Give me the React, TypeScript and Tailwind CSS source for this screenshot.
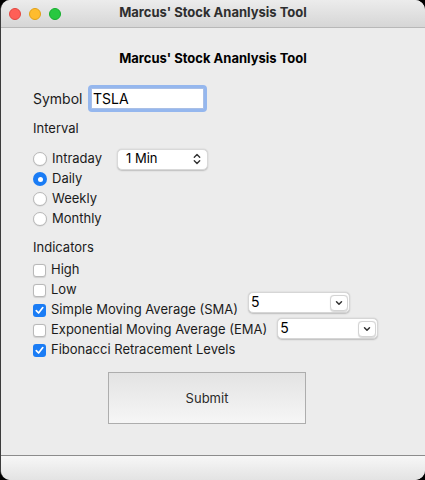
import { useState } from 'react'

const font = { fontFamily: 'Inter, "Noto Sans", sans-serif' }

const Radio = ({ checked }: { checked: boolean }) =>
    checked ? (
        <span className="flex items-center justify-center w-[14px] h-[14px] rounded-full bg-[#1a7cf5]">
            <span className="w-[5px] h-[5px] rounded-full bg-white" />
        </span>
    ) : (
        <span className="w-[14px] h-[14px] rounded-full bg-white border border-[#b9b9b9] shadow-[0_0.5px_1px_rgba(0,0,0,0.12)]" />
    )

const Check = ({ checked }: { checked: boolean }) =>
    checked ? (
        <span className="flex items-center justify-center w-[13px] h-[13px] rounded-[3px] bg-[#1a7cf5]">
            <svg width="9" height="9" viewBox="0 0 9 9" fill="none">
                <path d="M1.3 4.7 L3.6 7 L7.8 1.6" stroke="white" strokeWidth="1.7" strokeLinecap="round" strokeLinejoin="round" />
            </svg>
        </span>
    ) : (
        <span className="w-[13px] h-[13px] rounded-[3px] bg-white border border-[#b9b9b9] shadow-[0_0.5px_1px_rgba(0,0,0,0.12)]" />
    )

const ComboBox = ({ width, value }: { width: string; value: string }) => (
    <div
        className={`flex items-center justify-between h-[21px] bg-white rounded-[5px] border border-[#d6d6d6] shadow-[0_0.5px_1.5px_rgba(0,0,0,0.2)] pl-[2px] pr-[1px] ${width}`}>
        <span className="text-[14px] leading-none text-black -mt-[2px]">{value}</span>
        <span className="flex items-center justify-center w-[18px] h-[16px] rounded-[4px] border border-[#d4d4d4] bg-white shadow-[0_0.5px_1px_rgba(0,0,0,0.15)]">
            <svg width="8" height="6" viewBox="0 0 8 6" fill="none">
                <path d="M1.5 1.8 L4 4.3 L6.5 1.8" stroke="#333" strokeWidth="1.5" strokeLinecap="round" strokeLinejoin="round" />
            </svg>
        </span>
    </div>
)

const intervals = ['Intraday', 'Daily', 'Weekly', 'Monthly']

const App = () => {
    const [interval] = useState('Daily')

    return (
        <div className="w-[425px] h-[480px] bg-black" style={font}>
            <div className="w-full h-full rounded-[10px] overflow-hidden flex flex-col bg-[#ececec] border-l border-[#3c3c3c]">
                {/* title bar */}
                <div className="relative flex items-center justify-center h-[28px] border-b border-[#b8b8b8] bg-gradient-to-b from-[#ececec] to-[#d6d6d6]">
                    <div className="absolute left-[8px] top-[8px] flex gap-[8px]">
                        <span className="w-[12px] h-[12px] rounded-full bg-[#fe5f57] border border-[#e2463f]" />
                        <span className="w-[12px] h-[12px] rounded-full bg-[#febc2e] border border-[#e1a116]" />
                        <span className="w-[12px] h-[12px] rounded-full bg-[#28c840] border border-[#14ae2c]" />
                    </div>
                    <span className="text-[13px] font-bold text-[#2e2e2e] mt-[-1px]">Marcus' Stock Ananlysis Tool</span>
                </div>

                {/* content */}
                <div className="flex-1 flex flex-col pl-[32px] text-[13px] text-[#1b1b1b]">
                    <div className="mt-[22px] h-[16px] leading-[16px] text-center font-bold text-black -ml-[32px]">
                        Marcus' Stock Ananlysis Tool
                    </div>

                    <div className="mt-[19px] flex items-center h-[27px]">
                        <span className="w-[55px] text-[14px]">Symbol</span>
                        <div className="w-[119px] h-[27px] rounded-[4px] bg-[#95b7ee] p-[3px]">
                            <div className="w-full h-full bg-white border border-[#a9bfe6] flex items-center pl-[1px] text-[14px] text-black">
                                TSLA
                            </div>
                        </div>
                    </div>

                    <div className="mt-[7px] h-[20px] flex items-center">Interval</div>

                    <div className="mt-[10px] flex flex-col">
                        {intervals.map((name) => (
                            <div key={name} className="h-[20px] flex items-center">
                                <Radio checked={name === interval} />
                                <span className={`ml-[5px] ${name === 'Intraday' ? 'w-[65px]' : ''}`}>{name}</span>
                                {name === 'Intraday' && (
                                    <div className="flex items-center justify-between w-[91px] h-[21px] bg-white rounded-[5px] border border-[#d9d9d9] shadow-[0_0.5px_1.5px_rgba(0,0,0,0.2)] pl-[8px] pr-[6px]">
                                        <span className="text-black">1 Min</span>
                                        <svg width="8" height="12" viewBox="0 0 8 12" fill="none">
                                            <path d="M1.3 4.2 L4 1.5 L6.7 4.2 M1.3 7.8 L4 10.5 L6.7 7.8" stroke="#333" strokeWidth="1.4" strokeLinecap="round" strokeLinejoin="round" />
                                        </svg>
                                    </div>
                                )}
                            </div>
                        ))}
                    </div>

                    <div className="mt-[9px] h-[20px] flex items-center">Indicators</div>

                    <div className="mt-[2px] flex flex-col">
                        <div className="h-[20px] flex items-center">
                            <Check checked={false} />
                            <span className="ml-[5px]">High</span>
                        </div>
                        <div className="h-[20px] flex items-center">
                            <Check checked={false} />
                            <span className="ml-[5px]">Low</span>
                        </div>
                        <div className="h-[20px] flex items-start">
                            <div className="h-[20px] flex items-center">
                                <Check checked={true} />
                                <span className="ml-[5px]">Simple Moving Average (SMA)</span>
                            </div>
                            <div className="ml-[10px] -mt-[8px]">
                                <ComboBox width="w-[102px]" value="5" />
                            </div>
                        </div>
                        <div className="h-[20px] flex items-start">
                            <div className="h-[20px] flex items-center">
                                <Check checked={false} />
                                <span className="ml-[5px]">Exponential Moving Average (EMA)</span>
                            </div>
                            <div className="ml-[10px] -mt-[2px]">
                                <ComboBox width="w-[101px]" value="5" />
                            </div>
                        </div>
                        <div className="h-[20px] flex items-center">
                            <Check checked={true} />
                            <span className="ml-[5px]">Fibonacci Retracement Levels</span>
                        </div>
                    </div>

                    <button className="mt-[12px] ml-[75px] w-[198px] h-[52px] border border-[#adadad] bg-gradient-to-b from-[#e3e3e3] to-[#f6f6f6] text-[13px] text-[#2a2a2a] pt-[2px]">
                        Submit
                    </button>
                </div>

                {/* bottom bar */}
                <div className="h-[25px] border-t border-[#8c8c8c] bg-gradient-to-b from-[#f7f7f7] to-[#e3e3e3]" />
            </div>
        </div>
    )
}

export default App
